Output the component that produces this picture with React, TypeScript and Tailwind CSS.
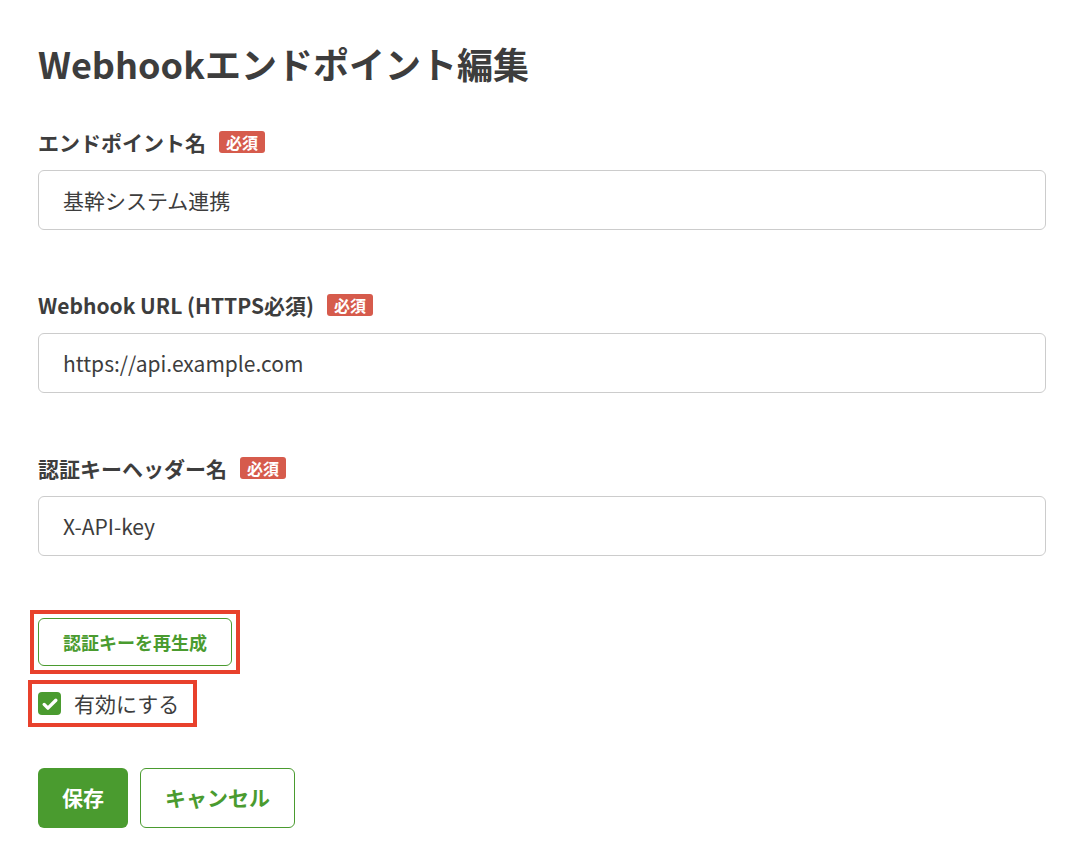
const FONT = "font-['Noto_Sans_CJK_JP','Noto_Sans',sans-serif]";

const Required = () => (
  <span className="ml-[13px] inline-flex h-[22px] items-center rounded-[3px] bg-[#d65b4c] px-[7px] text-[16px] font-bold leading-none text-white">
    必須
  </span>
);

const Field = ({ label, value }: { label: string; value: string }) => (
  <div>
    <div className="flex items-center">
      <span className="text-[21px] font-bold leading-[30px] text-[#3d3d3d]">{label}</span>
      <Required />
    </div>
    <input
      readOnly
      value={value}
      className="mt-[13px] h-[60px] w-full rounded-[6px] border border-[#cccccc] bg-white px-6 text-[21px] text-[#3d3d3d] outline-none"
    />
  </div>
);

export default function App() {
  return (
    <div className={`${FONT} min-h-screen bg-white pl-[38px] pr-[42px] pt-[36px] text-[#3d3d3d]`}>
      <h1 className="text-[36px] font-bold leading-[54px]">Webhookエンドポイント編集</h1>

      <div className="mt-[37px] flex flex-col gap-[60px]">
        <Field label="エンドポイント名" value="基幹システム連携" />
        <Field label="Webhook URL (HTTPS必須)" value="https://api.example.com" />
        <Field label="認証キーヘッダー名" value="X-API-key" />
      </div>

      <div className="mt-[54px] -ml-2 w-fit border-4 border-[#e8412c] p-1">
        <button className="h-[48px] w-[194px] rounded-[6px] border border-[#4a9b2f] bg-white text-[18px] font-bold text-[#4a9b2f]">
          認証キーを再生成
        </button>
      </div>

      <div className="mt-[6px] -ml-[10px] flex w-fit items-center border-4 border-[#e8412c] py-[4px] pl-[6px] pr-[14px]">
        <span className="flex h-[23px] w-[23px] items-center justify-center rounded-[4px] bg-[#4a9b2f]">
          <svg viewBox="0 0 24 24" className="h-[20px] w-[20px]" fill="none" stroke="white" strokeWidth="4" strokeLinecap="round" strokeLinejoin="round">
            <path d="M5 12.5l4.5 4.5L19 7.5" />
          </svg>
        </span>
        <span className="ml-[13px] text-[21px] leading-[31px] text-[#3d3d3d]">有効にする</span>
      </div>

      <div className="mt-[41px] flex gap-3">
        <button className="h-[60px] w-[90px] rounded-[6px] bg-[#4a9b2f] text-[21px] font-bold text-white">保存</button>
        <button className="h-[60px] w-[155px] rounded-[6px] border border-[#4a9b2f] bg-white text-[21px] font-bold text-[#4a9b2f]">
          キャンセル
        </button>
      </div>
    </div>
  );
}
